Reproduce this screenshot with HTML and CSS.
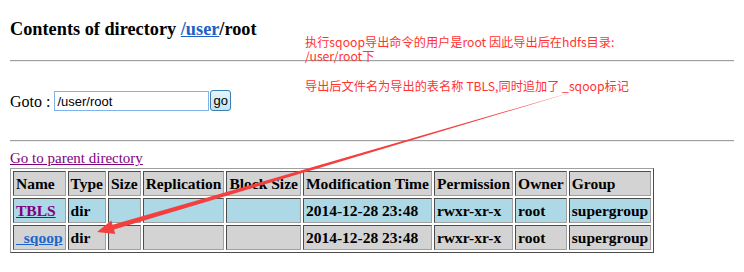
FILE: index.html
```html
<!DOCTYPE html>
<html lang="en">
<head>
    <meta charset="UTF-8">
    <title>HDFS:/user/root</title>
    <link rel="stylesheet" href="styles.css">
</head>
<body>
    <h1 class="title">Contents of directory <a href="#" class="dir-link">/user</a>/root</h1>
    <hr>
    <form class="goto" onsubmit="return false">
        Goto : <input type="text" class="goto-input" value="/user/root"><button class="goto-btn">go</button>
    </form>
    <hr>
    <a href="#" class="parent-link">Go to parent directory</a>
    <table class="listing" border="1">
        <thead>
            <tr>
                <th>Name</th>
                <th>Type</th>
                <th>Size</th>
                <th>Replication</th>
                <th>Block Size</th>
                <th>Modification Time</th>
                <th>Permission</th>
                <th>Owner</th>
                <th>Group</th>
            </tr>
        </thead>
        <tbody>
            <tr class="row-blue">
                <td><a href="#" class="visited">TBLS</a></td>
                <td>dir</td>
                <td></td>
                <td></td>
                <td></td>
                <td>2014-12-28 23:48</td>
                <td>rwxr-xr-x</td>
                <td>root</td>
                <td>supergroup</td>
            </tr>
            <tr class="row-grey">
                <td><a href="#" class="fresh">_sqoop</a></td>
                <td>dir</td>
                <td></td>
                <td></td>
                <td></td>
                <td>2014-12-28 23:48</td>
                <td>rwxr-xr-x</td>
                <td>root</td>
                <td>supergroup</td>
            </tr>
        </tbody>
    </table>

    <!-- annotations drawn on top of the screenshot -->
    <div class="note note-top">执行sqoop导出命令的用户是root 因此导出后在hdfs目录:</div>
    <div class="note note-second">/user/root下</div>
    <div class="note note-mid">导出后文件名为导出的表名称 TBLS,同时追加了 _sqoop标记</div>
    <svg class="arrow" width="744" height="272" viewBox="0 0 744 272">
        <polygon points="576,91 112.6,224.8 111.3,220.5 97,232 115.3,233.9 114,229.6" fill="#f43f3f"/>
    </svg>
</body>
</html>
```

FILE: styles.css
```css
body {
    margin: 10px;
    font-family: 'Liberation Serif', 'Times New Roman', serif;
    font-size: 16px;
    color: #000;
    position: relative;
}

.title {
    font-size: 18.3px;
    font-weight: bold;
    margin: 9px 0 0 0;
}

.dir-link {
    color: #2160c4;
}

hr {
    border: 0;
    border-top: 1px solid #a0a0a0;
    border-bottom: 1px solid #eee;
    margin: 20px -10px 0 0;
}

.goto {
    margin: 28px 0 0 0;
    display: flex;
    align-items: flex-end;
}

.goto-input {
    font-family: 'Liberation Sans', Arial, sans-serif;
    font-size: 13px;
    width: 155px;
    height: 20px;
    box-sizing: border-box;
    border: 1px solid #7eb4ea;
    padding: 1px 2px;
    margin: 0 1px 0 4px;
}

.goto-btn {
    font-family: 'Liberation Sans', Arial, sans-serif;
    font-size: 13px;
    height: 21px;
    padding: 0 2px;
    border: 1px solid #3c7fb1;
    border-radius: 3px;
    background: linear-gradient(#e5f4fc, #c4e5f6);
}

.goto + hr {
    margin-top: 29px;
}

.parent-link {
    display: block;
    margin-top: 8px;
    color: #800080;
    font-size: 15px;
}

.listing {
    margin-top: 1px;
    border-spacing: 2px;
    border: 1px outset #a0a0a0;
    font-weight: bold;
    font-size: 15.5px;
}

.listing th,
.listing td {
    border: 1px inset #a0a0a0;
    padding: 2px 2px;
    height: 19px;
    text-align: left;
    white-space: nowrap;
}

.listing th {
    background-color: lightgrey;
}

.row-blue td {
    background-color: lightblue;
}

.row-grey td {
    background-color: lightgrey;
}

.listing a.visited {
    color: #800080;
}

.listing a.fresh {
    color: #1a66cc;
}

.note {
    position: absolute;
    left: 295px;
    font-family: 'Noto Sans CJK SC', sans-serif;
    font-size: 12.2px;
    line-height: 14px;
    color: #ff3333;
}

.note-top {
    top: 25px;
}

.note-second {
    top: 39px;
}

.note-mid {
    top: 69px;
}

.arrow {
    position: absolute;
    left: -10px;
    top: -10px;
    pointer-events: none;
}
```
